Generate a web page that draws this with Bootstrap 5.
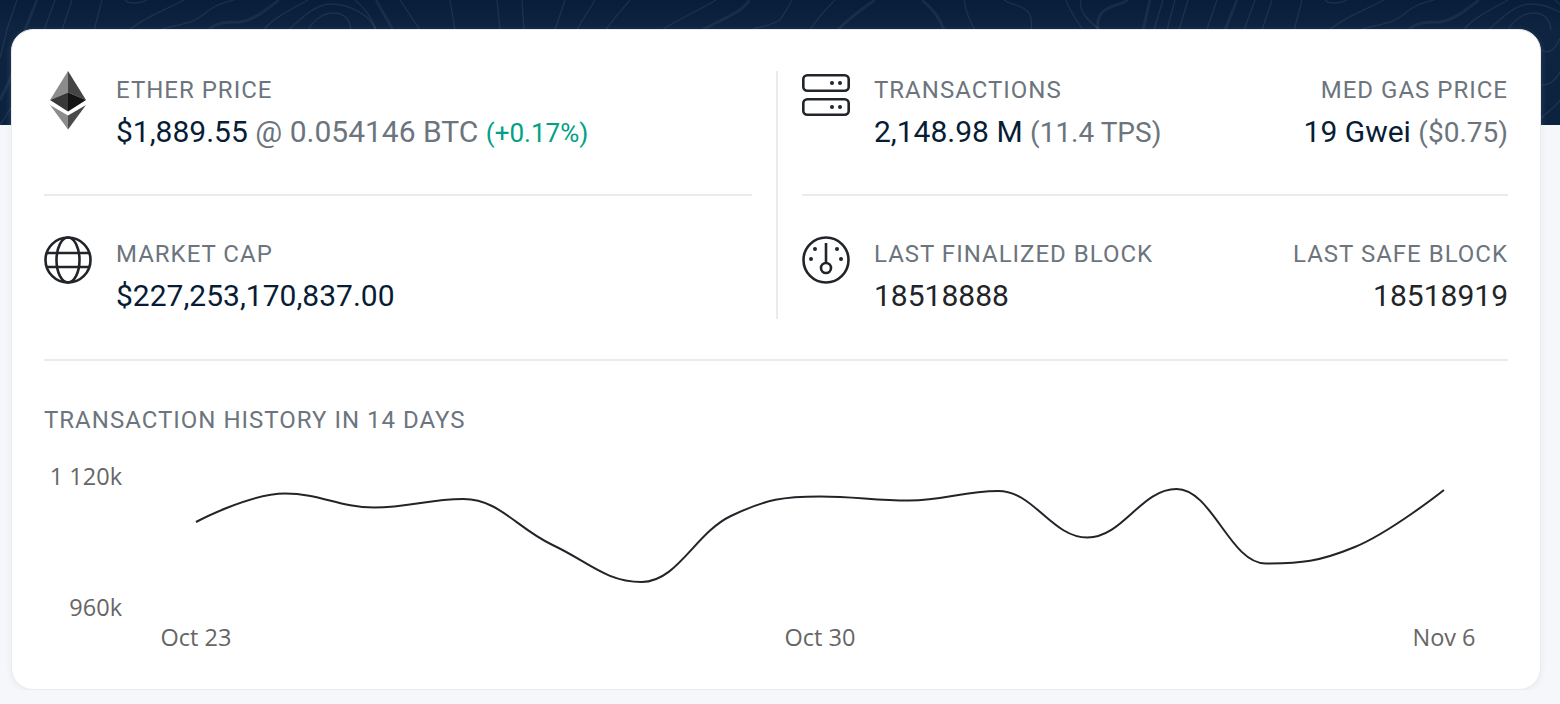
<!DOCTYPE html>
<html lang="en">
<head>
    <meta charset="UTF-8">
    <meta name="viewport" content="width=device-width, initial-scale=1.0">
    <title>Etherscan stats</title>
    <link href="https://cdn.jsdelivr.net/npm/bootstrap@5.3.2/dist/css/bootstrap.min.css" rel="stylesheet">
    <style>
        body { background: #f5f7fa; font-family: Roboto, "Liberation Sans", sans-serif; }
        .hero-band { height: 125px; background: linear-gradient(#081d39, #0e2441 30px, #0c2340); overflow: hidden; }
        .hero-band svg { display: block; }
        .contour { fill: none; stroke: #fff; stroke-opacity: .08; stroke-width: 1.3; }
        .contour-wide { fill: none; stroke: #fff; stroke-opacity: .06; stroke-width: 3; }
        .stats-card { margin: -96px 19px 0 11px; height: 661px; padding: 41px 32px 0; border: 1px solid #e9ecef; border-radius: 22px; box-shadow: 0 2px 6px rgba(189,197,209,.2); }
        .col-left { width: 734px; padding: 0 24px 1px 0; border-right: 2px solid #e9ecef; }
        .col-right { width: 730px; padding: 0 0 1px 24px; }
        .stat-item { height: 83px; }
        .stat-icon { flex: 0 0 72px; }
        .stat-icon svg { display: block; }
        .stat-label { font-size: 24px; line-height: 38px; letter-spacing: 1px; color: #6c757d; text-transform: uppercase; }
        .stat-value { font-size: 30px; line-height: 46px; color: #081d35; white-space: nowrap; }
        .stat-value.num { color: #212529; }
        .stat-muted { color: #6c757d; }
        .stat-note { color: #6c757d; font-size: 28px; }
        .stat-up { color: #00a186; font-size: 26px; }
        .rule { height: 2px; margin: 40px 0 39px; background: #e9ecef; }
        .rule-full { height: 2px; margin: 40px 0 0; background: #e9ecef; }
        .chart-title { margin-top: 40px; font-size: 24px; line-height: 38px; letter-spacing: 1px; color: #6c757d; }
        .chart-box { display: block; margin-top: 15px; }
        .chart-box text { font-family: "Open Sans", sans-serif; font-size: 23.5px; fill: #666; }
    </style>
</head>
<body>
    <div class="hero-band">
        <svg width="1560" height="125">
            <defs>
                <g id="topo">
                    <path class="contour" d="M17 0L7 29C5 40 2 50 0 58M55 0L44 30M72 0L62 30M102 0L94 30"/>
                    <path class="contour-wide" d="M37 0L25 30C20 60 8 85 0 100"/>
                    <path class="contour" d="M125 0C128 4 140 4 147 0M184 0C165 10 145 17 129 30"/>
                    <path class="contour" d="M234 0C210 5 205 15 195 20C185 25 170 26 159 30"/>
                    <path class="contour-wide" d="M279 0C265 10 255 20 240 22C225 22 214 23 209 30"/>
                    <path class="contour" d="M308 0C290 10 270 20 264 30"/>
                    <path class="contour" d="M288 30C300 20 315 4 330 4C350 4 370 15 376 30"/>
                    <path class="contour" d="M308 30C315 18 325 13 333 13C345 13 350 20 351 30"/>
                    <path class="contour" d="M355 0C365 8 372 18 376 30"/>
                    <path class="contour-wide" d="M376 0L393 30"/>
                    <path class="contour" d="M400 0L420 30M450 0L455 30M497 0L500 30M522 0L524 30"/>
                    <path class="contour" d="M565 0L555 30M595 0C588 12 582 20 577 30M630 0C620 12 612 20 606 30"/>
                    <path class="contour" d="M716 0C700 10 680 18 662 30"/>
                    <path class="contour-wide" d="M749 0C745 10 725 18 702 30"/>
                    <path class="contour" d="M792 0C788 8 784 14 780 20C772 25 760 27 750 30"/>
                    <path class="contour" d="M835 0C825 10 816 20 810 30"/>
                    <path class="contour-wide" d="M875 0C860 10 848 20 837 30"/>
                    <path class="contour-wide" d="M922 0C932 8 940 18 944 30"/>
                    <path class="contour" d="M964 0C966 12 970 22 975 30"/>
                    <path class="contour" d="M1004 0C1015 8 1035 3 1031 30"/>
                    <path class="contour" d="M1066 0C1070 12 1078 22 1083 30M1081 0C1078 12 1090 22 1100 30"/>
                    <path class="contour-wide" d="M1128 0C1115 8 1095 5 1098 30"/>
                    <path class="contour-wide" d="M1150 0L1143 30"/>
                    <path class="contour" d="M1163 0L1154 30M1175 0L1167 30M1188 0L1179 30"/>
                </g>
            </defs>
            <use href="#topo"/>
            <use href="#topo" x="1200"/>
            <path class="contour" d="M0 125L11 108M1541 118C1550 110 1556 106 1560 100M1541 85C1550 85 1556 80 1560 72M1541 50C1550 55 1556 48 1560 38"/>
        </svg>
    </div>

    <div class="card stats-card">
        <div class="d-flex">
            <div class="col-left">
                <div class="stat-item d-flex">
                    <div class="stat-icon">
                        <svg width="48" height="62" viewBox="44 71 48 62">
                            <polygon points="68,71 50,100 68,92.5" fill="#8c8c8c"/>
                            <polygon points="68,71 86,100 68,92.5" fill="#454545"/>
                            <polygon points="68,92.5 50,100 68,111.5" fill="#393939"/>
                            <polygon points="68,92.5 86,100 68,111.5" fill="#141414"/>
                            <polygon points="50,105 68,115.5 68,129.5" fill="#8c8c8c"/>
                            <polygon points="86,105 68,115.5 68,129.5" fill="#4a4a49"/>
                        </svg>
                    </div>
                    <div>
                        <div class="stat-label">Ether Price</div>
                        <div class="stat-value">$1,889.55 <span class="stat-muted">@ 0.054146 BTC</span> <span class="stat-up">(+0.17%)</span></div>
                    </div>
                </div>
                <div class="rule"></div>
                <div class="stat-item d-flex">
                    <div class="stat-icon">
                        <svg width="48" height="62" viewBox="44 235 48 62" fill="none" stroke="#212529" stroke-width="2.6">
                            <circle cx="68" cy="260" r="22.5"/>
                            <ellipse cx="68" cy="260" rx="11.5" ry="22.5"/>
                            <path d="M47 253H89M47 267H89"/>
                        </svg>
                    </div>
                    <div>
                        <div class="stat-label">Market Cap</div>
                        <div class="stat-value">$227,253,170,837.00</div>
                    </div>
                </div>
            </div>
            <div class="col-right">
                <div class="stat-item d-flex">
                    <div class="stat-icon">
                        <svg width="50" height="62" viewBox="802 71 50 62" fill="none" stroke="#212529" stroke-width="2.6">
                            <rect x="803.3" y="75.3" width="45.4" height="15.4" rx="4"/>
                            <rect x="803.3" y="99.3" width="45.4" height="15.4" rx="4"/>
                            <g fill="#212529" stroke="none">
                                <circle cx="832" cy="83" r="2"/><circle cx="840" cy="83" r="2"/>
                                <circle cx="832" cy="107" r="2"/><circle cx="840" cy="107" r="2"/>
                            </g>
                        </svg>
                    </div>
                    <div class="flex-grow-1 d-flex justify-content-between">
                        <div>
                            <div class="stat-label">Transactions</div>
                            <div class="stat-value">2,148.98 M <span class="stat-note">(11.4 TPS)</span></div>
                        </div>
                        <div class="text-end">
                            <div class="stat-label">Med Gas Price</div>
                            <div class="stat-value">19 Gwei <span class="stat-note">($0.75)</span></div>
                        </div>
                    </div>
                </div>
                <div class="rule"></div>
                <div class="stat-item d-flex">
                    <div class="stat-icon">
                        <svg width="50" height="62" viewBox="802 235 50 62" fill="none" stroke="#212529" stroke-width="2.6">
                            <circle cx="826" cy="260" r="22.5"/>
                            <circle cx="826" cy="268" r="5"/>
                            <path d="M826 243V263"/>
                            <g fill="#212529" stroke="none">
                                <circle cx="815" cy="249" r="2"/><circle cx="837" cy="249" r="2"/>
                                <circle cx="811" cy="259" r="2"/><circle cx="841" cy="259" r="2"/>
                            </g>
                        </svg>
                    </div>
                    <div class="flex-grow-1 d-flex justify-content-between">
                        <div>
                            <div class="stat-label">Last Finalized Block</div>
                            <div class="stat-value num">18518888</div>
                        </div>
                        <div class="text-end">
                            <div class="stat-label">Last Safe Block</div>
                            <div class="stat-value num">18518919</div>
                        </div>
                    </div>
                </div>
            </div>
        </div>
        <div class="rule-full"></div>
        <div class="chart-title text-uppercase">Transaction History in 14 Days</div>
        <svg class="chart-box" width="1464" height="200" viewBox="44 454 1464 200">
            <text x="122" y="485" text-anchor="end">1 120k</text>
            <text x="122" y="616" text-anchor="end">960k</text>
            <text x="196" y="646" text-anchor="middle">Oct 23</text>
            <text x="820" y="646" text-anchor="middle">Oct 30</text>
            <text x="1444" y="646" text-anchor="middle">Nov 6</text>
            <path id="txLine" fill="none" stroke="#212529" stroke-width="2"/>
        </svg>
    </div>
    <script src="https://cdn.jsdelivr.net/npm/bootstrap@5.3.2/dist/js/bootstrap.bundle.min.js"></script>
    <script>
        // same spline the chart library uses, one y per day
        const ys = [522, 493.5, 507.5, 499, 545, 582, 516, 496.5, 500.5, 491, 537.5, 489, 563.5, 547, 490];
        const pts = ys.map((y, i) => [196 + i * 89.14, y]);

        function controls(i) {
            const [x, y] = pts[i];
            if (i === 0 || i === pts.length - 1) return [x, y, x, y];
            const [px, py] = pts[i - 1];
            const [nx, ny] = pts[i + 1];
            const lx = (1.5 * x + px) / 2.5, rx = (1.5 * x + nx) / 2.5;
            let ly = (1.5 * y + py) / 2.5, ry = (1.5 * y + ny) / 2.5;
            const fix = ((ry - ly) * (rx - x)) / (rx - lx) + y - ry;
            ly += fix;
            ry += fix;
            if (ly > py && ly > y) { ly = Math.max(py, y); ry = 2 * y - ly; }
            else if (ly < py && ly < y) { ly = Math.min(py, y); ry = 2 * y - ly; }
            if (ry > ny && ry > y) { ry = Math.max(ny, y); ly = 2 * y - ry; }
            else if (ry < ny && ry < y) { ry = Math.min(ny, y); ly = 2 * y - ry; }
            return [lx, ly, rx, ry];
        }

        let d = `M${pts[0][0]} ${pts[0][1]}`;
        for (let i = 1; i < pts.length; i++) {
            const a = controls(i - 1), b = controls(i);
            d += `C${a[2]} ${a[3]} ${b[0]} ${b[1]} ${pts[i][0]} ${pts[i][1]}`;
        }
        document.getElementById('txLine').setAttribute('d', d);
    </script>
</body>
</html>
